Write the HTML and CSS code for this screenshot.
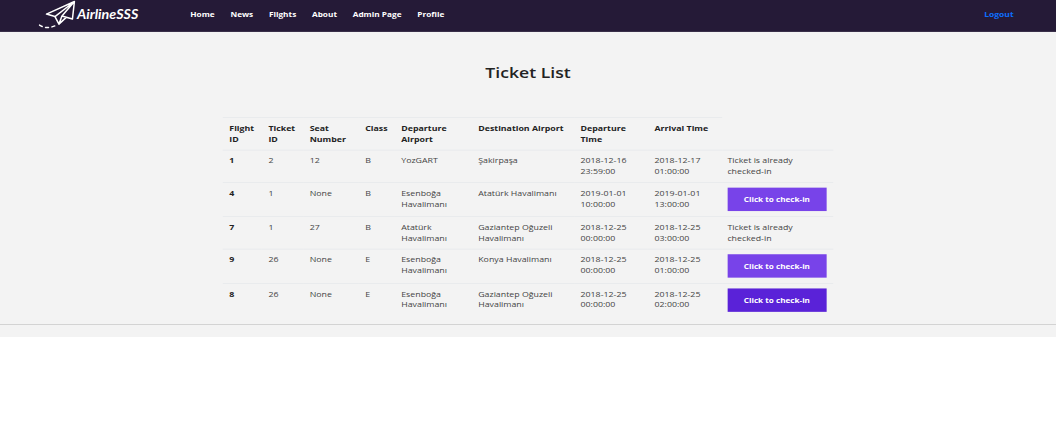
FILE: index.html
```html
<!DOCTYPE html>
<html lang="en">
<head>
<meta charset="utf-8">
<title>Ticket List</title>
<link rel="stylesheet" href="styles.css">
</head>
<body>
<div class="viewport">
<div class="page">
  <header class="navbar">
    <svg class="logo" viewBox="0 0 102 30" preserveAspectRatio="none" role="img" aria-label="AirlineSSS">
      <g fill="none" stroke="#fff" stroke-width="1.5" stroke-linejoin="round" stroke-linecap="round">
        <path d="M36 1.500 8 14l8.500 2.500L36 1.500 34 19l-10.500-3L36 1.500M16.500 16.500 20.500 24l3-8M20.500 24l7-6.500"/>
        <path d="M1 25q7 4.500 16 .5" stroke-dasharray="3 3.500"/>
      </g>
      <text class="logo-text" x="38.500" y="18.500" textLength="61.500" lengthAdjust="spacingAndGlyphs">AirlineSSS</text>
    </svg>
    <nav class="menu">
      <a>Home</a><a>News</a><a>Flights</a><a>About</a><a>Admin Page</a><a>Profile</a>
    </nav>
    <a class="logout">Logout</a>
  </header>
  <main class="content">
    <h1 class="title">Ticket List</h1>
    <table class="tickets">
      <colgroup><col class="c-flight"><col class="c-ticket"><col class="c-seat"><col class="c-class"><col class="c-from"><col class="c-to"><col class="c-dep"><col class="c-arr"><col class="c-action"></colgroup>
      <thead>
        <tr><th>Flight ID</th><th>Ticket ID</th><th>Seat Number</th><th>Class</th><th>Departure Airport</th><th>Destination Airport</th><th>Departure Time</th><th>Arrival Time</th></tr>
      </thead>
      <tbody>
        <tr><th>1</th><td>2</td><td>12</td><td>B</td><td>YozGART</td><td>Şakirpaşa</td><td>2018-12-16 23:59:00</td><td>2018-12-17 01:00:00</td><td>Ticket is already checked-in</td></tr>
        <tr><th>4</th><td>1</td><td>None</td><td>B</td><td>Esenboğa Havalimanı</td><td>Atatürk Havalimanı</td><td>2019-01-01 10:00:00</td><td>2019-01-01 13:00:00</td><td><button class="checkin">Click to check-in</button></td></tr>
        <tr><th>7</th><td>1</td><td>27</td><td>B</td><td>Atatürk Havalimanı</td><td>Gaziantep Oğuzeli Havalimanı</td><td>2018-12-25 00:00:00</td><td>2018-12-25 03:00:00</td><td>Ticket is already checked-in</td></tr>
        <tr><th>9</th><td>26</td><td>None</td><td>E</td><td>Esenboğa Havalimanı</td><td>Konya Havalimanı</td><td>2018-12-25 00:00:00</td><td>2018-12-25 01:00:00</td><td><button class="checkin">Click to check-in</button></td></tr>
        <tr><th>8</th><td>26</td><td>None</td><td>E</td><td>Esenboğa Havalimanı</td><td>Gaziantep Oğuzeli Havalimanı</td><td>2018-12-25 00:00:00</td><td>2018-12-25 02:00:00</td><td><button class="checkin checkin-active">Click to check-in</button></td></tr>
      </tbody>
    </table>
    <hr class="rule">
  </main>
</div>
</div>
</body>
</html>
```
FILE: styles.css
```css
* { box-sizing: border-box; }
body { margin: 0; background: #fff; }
.viewport { width: 1056px; height: 432px; overflow: hidden; contain: strict; }
/* Full-size desktop layout, scaled down to the viewport */
.page {
  width: 1920px;
  height: 960px;
  transform: scale(.55, .45);
  transform-origin: 0 0;
  font: 16px/24px "Open Sans", sans-serif;
  color: #444;
}
.navbar { display: flex; align-items: flex-start; height: 71px; padding-left: 70px; background: #251a37; }
.logo { width: 185px; height: 67px; }
.logo-text { font: italic 700 13px Lato, sans-serif; fill: #fff; }
.menu { display: flex; gap: 28.600px; padding-left: 91px; }
.menu a, .logout { padding-top: 20px; font-size: 15px; font-weight: 700; color: #fff; white-space: nowrap; }
.logout { margin-left: auto; margin-right: 77px; font-size: 15.500px; color: #0d6efd; }
.content { height: 678px; padding-top: 71px; background: #f3f3f3; }
.title { margin: 0; padding-top: 2px; height: 119px; font-size: 32px; line-height: 36px; font-weight: 600; text-align: center; color: #222; }
.tickets { width: 1110px; margin: 0 auto; table-layout: fixed; border-collapse: separate; border-spacing: 0; }
.tickets th, .tickets td { padding: 11px 8px 12px 12px; border-top: 1px solid #dee2e6; vertical-align: top; text-align: left; }
.tickets th { color: #222; font-weight: 700; }
.tickets th:nth-child(6) { white-space: nowrap; }
.tickets td:last-child { padding-left: 10px; padding-right: 10px; }
.c-flight { width: 71px; }
.c-ticket { width: 75px; }
.c-seat { width: 101px; }
.c-class { width: 65.500px; }
.c-from { width: 140px; }
.c-to { width: 186px; }
.c-dep { width: 134.500px; }
.c-arr { width: 134.500px; }
.c-action { width: 202.500px; }
.checkin { display: block; width: 180px; height: 52px; padding: 0; border: 0; background: #7843e9; color: #fff; font: 700 14.800px/52px "Open Sans", sans-serif; text-align: center; }
.checkin-active { background: #5a22d8; }
.rule { margin: 15px 0 0; border: 0; border-top: 2px solid #d0d0d0; }
```
